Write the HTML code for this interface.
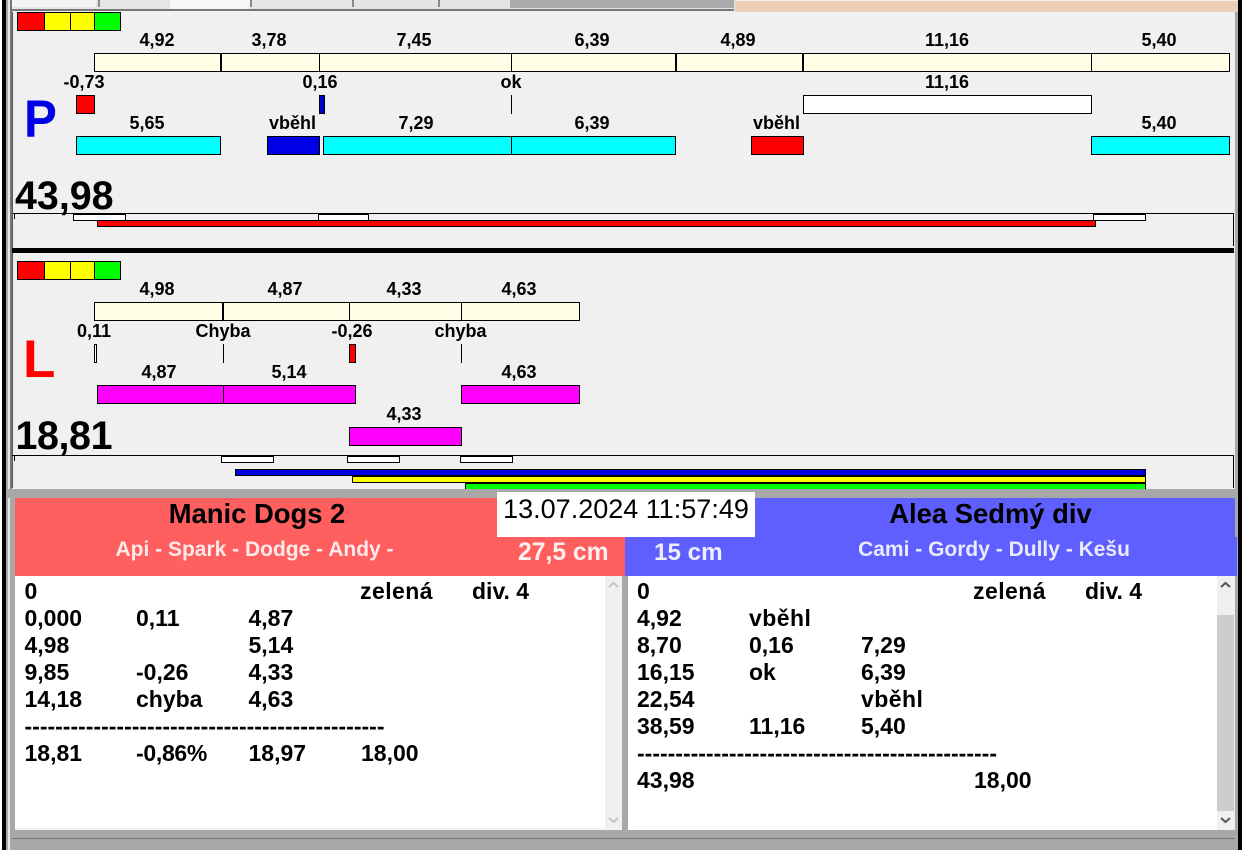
<!DOCTYPE html>
<html><head><meta charset="utf-8"><style>
html,body{margin:0;padding:0;background:#f0f0f0}
#p{position:relative;width:1242px;height:850px;overflow:hidden;background:#f0f0f0;font-family:"Liberation Sans",sans-serif;color:#000}
#p div{position:absolute;box-sizing:border-box}
.b{border:1px solid #000}
.cr{background:#ffffe8}.cy{background:#0ff}.m{background:#f0f}.r{background:#f00}.bl{background:#0000e6}.w{background:#fff}.ye{background:#ff0}.g{background:#0f0}
.l{font-weight:bold;font-size:18px;line-height:20px;height:20px;white-space:nowrap;transform:translateX(-50%);color:#000}
.t{font-weight:bold;font-size:23px;line-height:27px;height:27px;white-space:nowrap;color:#000}
.s{letter-spacing:.45px}
.n{font-weight:bold;font-size:39.4px;line-height:44px;white-space:nowrap}
</style></head><body><div id="p">
<!-- frame -->
<div style="left:0;top:0;width:2px;height:850px;background:#fff"></div>
<div style="left:2px;top:0;width:4px;height:850px;background:#000"></div>
<div style="left:6px;top:0;width:6px;height:850px;background:#a8a8a8"></div>
<div style="left:8px;top:0;width:2px;height:850px;background:#e8e8e8"></div>
<div style="left:10px;top:0;width:2px;height:490px;background:#777"></div>
<div style="left:12px;top:0;width:723px;height:10px;background:#e4e4e4"></div>
<div style="left:12px;top:0;width:84px;height:7px;background:#f4f4f4"></div>
<div style="left:98px;top:0;width:2px;height:7px;background:#888"></div>
<div style="left:100px;top:0;width:68px;height:7px;background:#e6e6e6"></div>
<div style="left:170px;top:0;width:80px;height:9px;background:#f6f6f6"></div>
<div style="left:250px;top:0;width:2px;height:7px;background:#888"></div>
<div style="left:252px;top:0;width:100px;height:7px;background:#e6e6e6"></div>
<div style="left:352px;top:0;width:2px;height:7px;background:#888"></div>
<div style="left:438px;top:0;width:2px;height:7px;background:#888"></div>
<div style="left:510px;top:0;width:224px;height:8px;background:#aaa"></div>
<div style="left:12px;top:9px;width:722px;height:2px;background:#777"></div>
<div style="left:735px;top:1px;width:503px;height:11px;background:#eccfb4"></div>
<div style="left:1235px;top:12px;width:3px;height:838px;background:#a8a8a8"></div>
<div style="left:1238px;top:0;width:4px;height:850px;background:#000"></div>

<!-- semaphore P -->
<div class="b r" style="left:17px;top:12px;width:28px;height:19px"></div>
<div class="b ye" style="left:44px;top:12px;width:27px;height:19px"></div>
<div class="b ye" style="left:70px;top:12px;width:25px;height:19px"></div>
<div class="b g" style="left:94px;top:12px;width:27px;height:19px"></div>

<div class="l" style="left:157px;top:30px">4,92</div>
<div class="l" style="left:269px;top:30px">3,78</div>
<div class="l" style="left:414px;top:30px">7,45</div>
<div class="l" style="left:592px;top:30px">6,39</div>
<div class="l" style="left:738px;top:30px">4,89</div>
<div class="l" style="left:947px;top:30px">11,16</div>
<div class="l" style="left:1159px;top:30px">5,40</div>

<div class="b cr" style="left:94px;top:53px;width:128px;height:19px"></div>
<div class="b cr" style="left:220px;top:53px;width:100px;height:19px;border-left-width:2px"></div>
<div class="b cr" style="left:319px;top:53px;width:193px;height:19px"></div>
<div class="b cr" style="left:511px;top:53px;width:166px;height:19px"></div>
<div class="b cr" style="left:675px;top:53px;width:129px;height:19px;border-left-width:2px"></div>
<div class="b cr" style="left:802px;top:53px;width:290px;height:19px;border-left-width:2px"></div>
<div class="b cr" style="left:1091px;top:53px;width:139px;height:19px"></div>

<div class="l" style="left:84px;top:72px">-0,73</div>
<div class="l" style="left:320px;top:72px">0,16</div>
<div class="l" style="left:511px;top:72px">ok</div>
<div class="l" style="left:947px;top:72px">11,16</div>

<div class="b r" style="left:76px;top:95px;width:19px;height:19px"></div>
<div class="b" style="left:319px;top:95px;width:6px;height:19px;background:#0000c8"></div>
<div style="left:511px;top:95px;width:1px;height:19px;background:#000"></div>
<div class="b w" style="left:803px;top:95px;width:289px;height:19px"></div>

<div class="l" style="left:147px;top:113px">5,65</div>
<div class="l" style="left:292.500px;top:113px">vběhl</div>
<div class="l" style="left:416px;top:113px">7,29</div>
<div class="l" style="left:592px;top:113px">6,39</div>
<div class="l" style="left:776.500px;top:113px">vběhl</div>
<div class="l" style="left:1159px;top:113px">5,40</div>

<div class="b cy" style="left:76px;top:136px;width:145px;height:19px"></div>
<div class="b bl" style="left:267px;top:136px;width:53px;height:19px"></div>
<div class="b cy" style="left:323px;top:136px;width:189px;height:19px"></div>
<div class="b cy" style="left:511px;top:136px;width:165px;height:19px"></div>
<div class="b r" style="left:751px;top:136px;width:53px;height:19px"></div>
<div class="b cy" style="left:1091px;top:136px;width:139px;height:19px"></div>

<div style="left:24px;top:85px;font-weight:bold;font-size:53px;line-height:70px;color:#0000e6;transform:scaleX(.93);transform-origin:left top">P</div>
<div class="n" style="left:15px;top:174px">43,98</div>

<div style="left:12px;top:213px;width:1222px;height:1px;background:#000"></div>
<div style="left:14px;top:213px;width:1px;height:6px;background:#000"></div>
<div style="left:1233px;top:213px;width:1px;height:33px;background:#000"></div>
<div style="left:12px;top:12px;width:1px;height:476px;background:#555"></div>
<div class="b w" style="left:73px;top:214px;width:53px;height:7px"></div>
<div class="b w" style="left:318px;top:214px;width:51px;height:7px"></div>
<div class="b w" style="left:1093px;top:214px;width:53px;height:7px"></div>
<div class="b r" style="left:97px;top:220px;width:999px;height:7px"></div>
<div style="left:12px;top:248px;width:1222px;height:5px;background:#000"></div>

<!-- semaphore L -->
<div class="b r" style="left:17px;top:261px;width:28px;height:19px"></div>
<div class="b ye" style="left:44px;top:261px;width:27px;height:19px"></div>
<div class="b ye" style="left:70px;top:261px;width:25px;height:19px"></div>
<div class="b g" style="left:94px;top:261px;width:27px;height:19px"></div>

<div class="l" style="left:157px;top:279px">4,98</div>
<div class="l" style="left:285px;top:279px">4,87</div>
<div class="l" style="left:404px;top:279px">4,33</div>
<div class="l" style="left:519px;top:279px">4,63</div>

<div class="b cr" style="left:94px;top:302px;width:130px;height:19px"></div>
<div class="b cr" style="left:222px;top:302px;width:128px;height:19px;border-left-width:2px"></div>
<div class="b cr" style="left:349px;top:302px;width:113px;height:19px"></div>
<div class="b cr" style="left:461px;top:302px;width:119px;height:19px"></div>

<div class="l" style="left:94px;top:321px">0,11</div>
<div class="l" style="left:223px;top:321px">Chyba</div>
<div class="l" style="left:352px;top:321px">-0,26</div>
<div class="l" style="left:460.500px;top:321px">chyba</div>

<div class="b w" style="left:94px;top:344px;width:3px;height:19px"></div>
<div style="left:223px;top:344px;width:1px;height:19px;background:#000"></div>
<div class="b r" style="left:349px;top:344px;width:7px;height:19px"></div>
<div style="left:461px;top:344px;width:1px;height:19px;background:#000"></div>

<div class="l" style="left:159px;top:362px">4,87</div>
<div class="l" style="left:289px;top:362px">5,14</div>
<div class="l" style="left:519px;top:362px">4,63</div>

<div class="b m" style="left:97px;top:385px;width:127px;height:19px"></div>
<div class="b m" style="left:223px;top:385px;width:133px;height:19px"></div>
<div class="b m" style="left:461px;top:385px;width:119px;height:19px"></div>

<div class="l" style="left:404px;top:404px">4,33</div>
<div class="b m" style="left:349px;top:427px;width:113px;height:19px"></div>

<div style="left:23px;top:325px;font-weight:bold;font-size:53px;line-height:70px;color:#f00">L</div>
<div class="n" style="left:15.500px;top:414px;letter-spacing:-.4px">18,81</div>

<div style="left:12px;top:455px;width:1222px;height:1px;background:#000"></div>
<div style="left:14px;top:455px;width:1px;height:6px;background:#000"></div>
<div style="left:1233px;top:455px;width:1px;height:33px;background:#000"></div>
<div class="b w" style="left:221px;top:456px;width:53px;height:7px"></div>
<div class="b w" style="left:347px;top:456px;width:53px;height:7px"></div>
<div class="b w" style="left:460px;top:456px;width:53px;height:7px"></div>
<div class="b bl" style="left:235px;top:469px;width:911px;height:7px"></div>
<div class="b ye" style="left:352px;top:476px;width:794px;height:7px"></div>
<div class="b g" style="left:465px;top:483px;width:681px;height:7px"></div>

<!-- bottom area -->
<div style="left:6px;top:489px;width:1229px;height:9px;background:#a8a8a8"></div>
<div style="left:12px;top:489px;width:3px;height:349px;background:#a8a8a8"></div>
<div style="left:15px;top:498px;width:610px;height:78px;background:#ff5f5f"></div>
<div style="left:625px;top:498px;width:610px;height:39px;background:#5f5fff"></div>
<div style="left:625px;top:537px;width:612px;height:39px;background:#5f5fff"></div>

<div style="left:15px;top:498px;width:484px;height:32px;font-weight:bold;font-size:27.4px;line-height:32px;text-align:center;white-space:nowrap">Manic Dogs 2</div>
<div style="left:755px;top:498px;width:471px;height:32px;font-weight:bold;font-size:27.4px;line-height:32px;text-align:center;white-space:nowrap">Alea Sedmý div</div>
<div style="left:15px;top:538px;width:479px;height:24px;font-weight:bold;font-size:21px;line-height:24px;text-align:center;color:#ffe9e9;white-space:nowrap">Api - Spark - Dodge - Andy -</div>
<div style="left:760px;top:538px;width:468px;height:24px;font-weight:bold;font-size:21px;line-height:24px;text-align:center;color:#e9e9ff;white-space:nowrap">Cami - Gordy - Dully - Kešu</div>
<div style="left:518px;top:538px;height:30px;font-weight:bold;font-size:24.700px;line-height:30px;color:#ffeeee;white-space:nowrap">27,5 cm</div>
<div style="left:654px;top:538px;height:30px;font-weight:bold;font-size:24.200px;line-height:30px;color:#eeeeff;white-space:nowrap">15 cm</div>
<div style="left:497px;top:492px;width:258px;height:45px;background:#fff;font-size:27px;line-height:35px;text-align:center;white-space:nowrap">13.07.2024 11:57:49</div>

<div style="left:15px;top:576px;width:590px;height:252px;background:#fff"></div>
<div style="left:605px;top:576px;width:17px;height:252px;background:#f0f0f0"></div>
<div style="left:622px;top:576px;width:6px;height:254px;background:#a8a8a8"></div>
<div style="left:628px;top:576px;width:589px;height:254px;background:#fff"></div>
<div style="left:1217px;top:576px;width:18px;height:254px;background:#f0f0f0"></div>
<div style="left:1217px;top:615px;width:17px;height:196px;background:#cdcdcd"></div>
<div style="left:15px;top:828px;width:607px;height:2px;background:#f4f4f4"></div>
<div style="left:12px;top:830px;width:1223px;height:20px;background:#a8a8a8"></div>
<div style="left:12px;top:838px;width:1223px;height:1px;background:#777"></div>

<svg style="position:absolute;left:605px;top:576px" width="17" height="17"><polyline points="4,11 8.500,7 13,11" fill="none" stroke="#c4c4c4" stroke-width="2"/></svg>
<svg style="position:absolute;left:605px;top:811px" width="17" height="17"><polyline points="4,7 8.500,11 13,7" fill="none" stroke="#c4c4c4" stroke-width="2"/></svg>
<svg style="position:absolute;left:1217px;top:576px" width="17" height="17"><polyline points="4,11 8.500,7 13,11" fill="none" stroke="#555" stroke-width="2"/></svg>
<svg style="position:absolute;left:1217px;top:811px" width="17" height="17"><polyline points="4,7 8.500,11 13,7" fill="none" stroke="#555" stroke-width="2"/></svg>

<!-- left list -->
<div class="t" style="left:24.500px;top:578px">0</div>
<div class="t s" style="left:360px;top:578px">zelená</div>
<div class="t" style="left:472px;top:578px">div. 4</div>
<div class="t" style="left:24.500px;top:605px">0,000</div>
<div class="t" style="left:136px;top:605px">0,11</div>
<div class="t" style="left:248.500px;top:605px">4,87</div>
<div class="t" style="left:24.500px;top:632px">4,98</div>
<div class="t" style="left:248.500px;top:632px">5,14</div>
<div class="t" style="left:24.500px;top:659px">9,85</div>
<div class="t" style="left:136px;top:659px">-0,26</div>
<div class="t" style="left:248.500px;top:659px">4,33</div>
<div class="t" style="left:24.500px;top:686px">14,18</div>
<div class="t" style="left:136px;top:686px">chyba</div>
<div class="t" style="left:248.500px;top:686px">4,63</div>
<div class="t" style="left:24.500px;top:713px">-----------------------------------------------</div>
<div class="t" style="left:24.500px;top:740px">18,81</div>
<div class="t" style="left:136px;top:740px;letter-spacing:-.3px">-0,86%</div>
<div class="t" style="left:248.500px;top:740px">18,97</div>
<div class="t" style="left:361px;top:740px">18,00</div>

<!-- right list -->
<div class="t" style="left:637px;top:578px">0</div>
<div class="t s" style="left:973px;top:578px">zelená</div>
<div class="t" style="left:1085px;top:578px">div. 4</div>
<div class="t" style="left:637px;top:605px">4,92</div>
<div class="t s" style="left:749px;top:605px">vběhl</div>
<div class="t" style="left:637px;top:632px">8,70</div>
<div class="t" style="left:749px;top:632px">0,16</div>
<div class="t" style="left:861px;top:632px">7,29</div>
<div class="t" style="left:637px;top:659px">16,15</div>
<div class="t" style="left:749px;top:659px">ok</div>
<div class="t" style="left:861px;top:659px">6,39</div>
<div class="t" style="left:637px;top:686px">22,54</div>
<div class="t s" style="left:861px;top:686px">vběhl</div>
<div class="t" style="left:637px;top:713px">38,59</div>
<div class="t" style="left:749px;top:713px">11,16</div>
<div class="t" style="left:861px;top:713px">5,40</div>
<div class="t" style="left:637px;top:740px">-----------------------------------------------</div>
<div class="t" style="left:637px;top:767px">43,98</div>
<div class="t" style="left:974px;top:767px">18,00</div>
</div></body></html>
